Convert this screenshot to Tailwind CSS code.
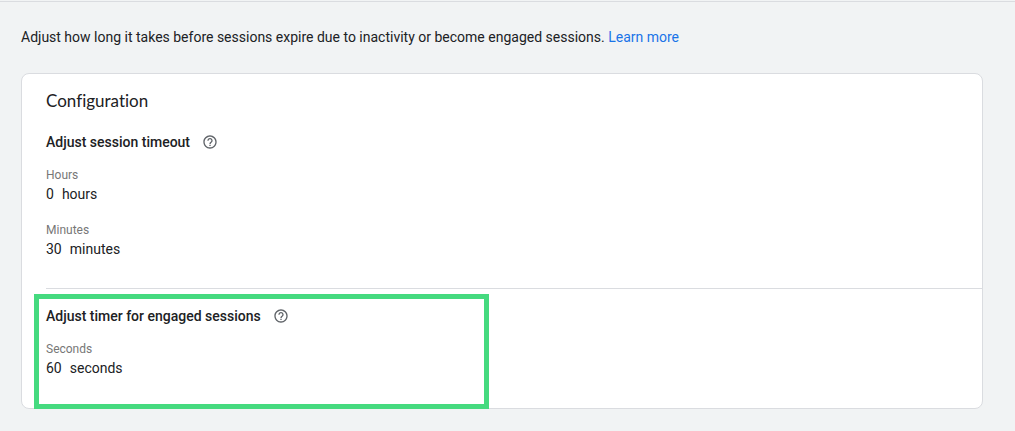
<!DOCTYPE html>
<html lang="en">
<head>
<meta charset="utf-8">
<meta name="viewport" content="width=device-width, initial-scale=1">
<title>Session settings</title>
<script src="https://cdn.jsdelivr.net/npm/@tailwindcss/browser@4"></script>
</head>
<body class="min-h-screen bg-[#f1f3f4] pt-px font-['Roboto',sans-serif] text-sm leading-5 text-[#202124]">
<main class="border-t border-[#dadce0] pt-[25px] pr-8 pb-5 pl-[21px]">
  <p>Adjust how long it takes before sessions expire due to inactivity or become engaged sessions. <a href="#" class="text-[#1a73e8]">Learn more</a></p>
  <div class="mt-[26px] rounded-lg border border-[#dadce0] bg-white">
    <section class="pt-[15px] pl-6">
      <h1 class="font-['Lato','Roboto',sans-serif] text-[17px] leading-6 [font-variant-ligatures:none]">Configuration</h1>
      <div class="mt-[19px] flex items-center gap-3">
        <h2 class="font-medium">Adjust session timeout</h2>
        <button type="button" aria-label="About session timeout" class="size-4 text-[#5f6368]">
          <svg viewBox="0 0 24 24" fill="currentColor" class="size-4"><path d="M11 18h2v-2h-2v2zm1-16C6.480 2 2 6.480 2 12s4.480 10 10 10 10-4.480 10-10S17.520 2 12 2zm0 18c-4.410 0-8-3.590-8-8s3.590-8 8-8 8 3.590 8 8-3.590 8-8 8zm0-14c-2.210 0-4 1.790-4 4h2c0-1.100.9-2 2-2s2 .9 2 2c0 2-3 1.750-3 5h2c0-2.250 3-2.500 3-5 0-2.210-1.790-4-4-4z"/></svg>
        </button>
      </div>
      <dl class="mt-[14px] border-b border-[#dadce0] pb-[29px]">
        <dt class="text-xs leading-[18px] text-[#777777]">Hours</dt>
        <dd class="flex gap-2"><span>0</span><span>hours</span></dd>
        <dt class="mt-[17px] text-xs leading-[18px] text-[#777777]">Minutes</dt>
        <dd class="flex gap-2"><span>30</span><span>minutes</span></dd>
      </dl>
    </section>
    <section class="relative pt-[17px] pb-[30px] pl-6">
      <div class="pointer-events-none absolute top-[5px] -bottom-px left-3 w-[455px] border-[5px] border-[#45da7f]"></div>
      <div class="flex items-center gap-3">
        <h2 class="font-medium">Adjust timer for engaged sessions</h2>
        <button type="button" aria-label="About the engaged session timer" class="size-4 text-[#5f6368]">
          <svg viewBox="0 0 24 24" fill="currentColor" class="size-4"><path d="M11 18h2v-2h-2v2zm1-16C6.480 2 2 6.480 2 12s4.480 10 10 10 10-4.480 10-10S17.520 2 12 2zm0 18c-4.410 0-8-3.590-8-8s3.590-8 8-8 8 3.590 8 8-3.590 8-8 8zm0-14c-2.210 0-4 1.790-4 4h2c0-1.100.9-2 2-2s2 .9 2 2c0 2-3 1.750-3 5h2c0-2.250 3-2.500 3-5 0-2.210-1.790-4-4-4z"/></svg>
        </button>
      </div>
      <dl class="mt-[14px]">
        <dt class="text-xs leading-[18px] text-[#777777]">Seconds</dt>
        <dd class="flex gap-2"><span>60</span><span>seconds</span></dd>
      </dl>
    </section>
  </div>
</main>
</body>
</html>
